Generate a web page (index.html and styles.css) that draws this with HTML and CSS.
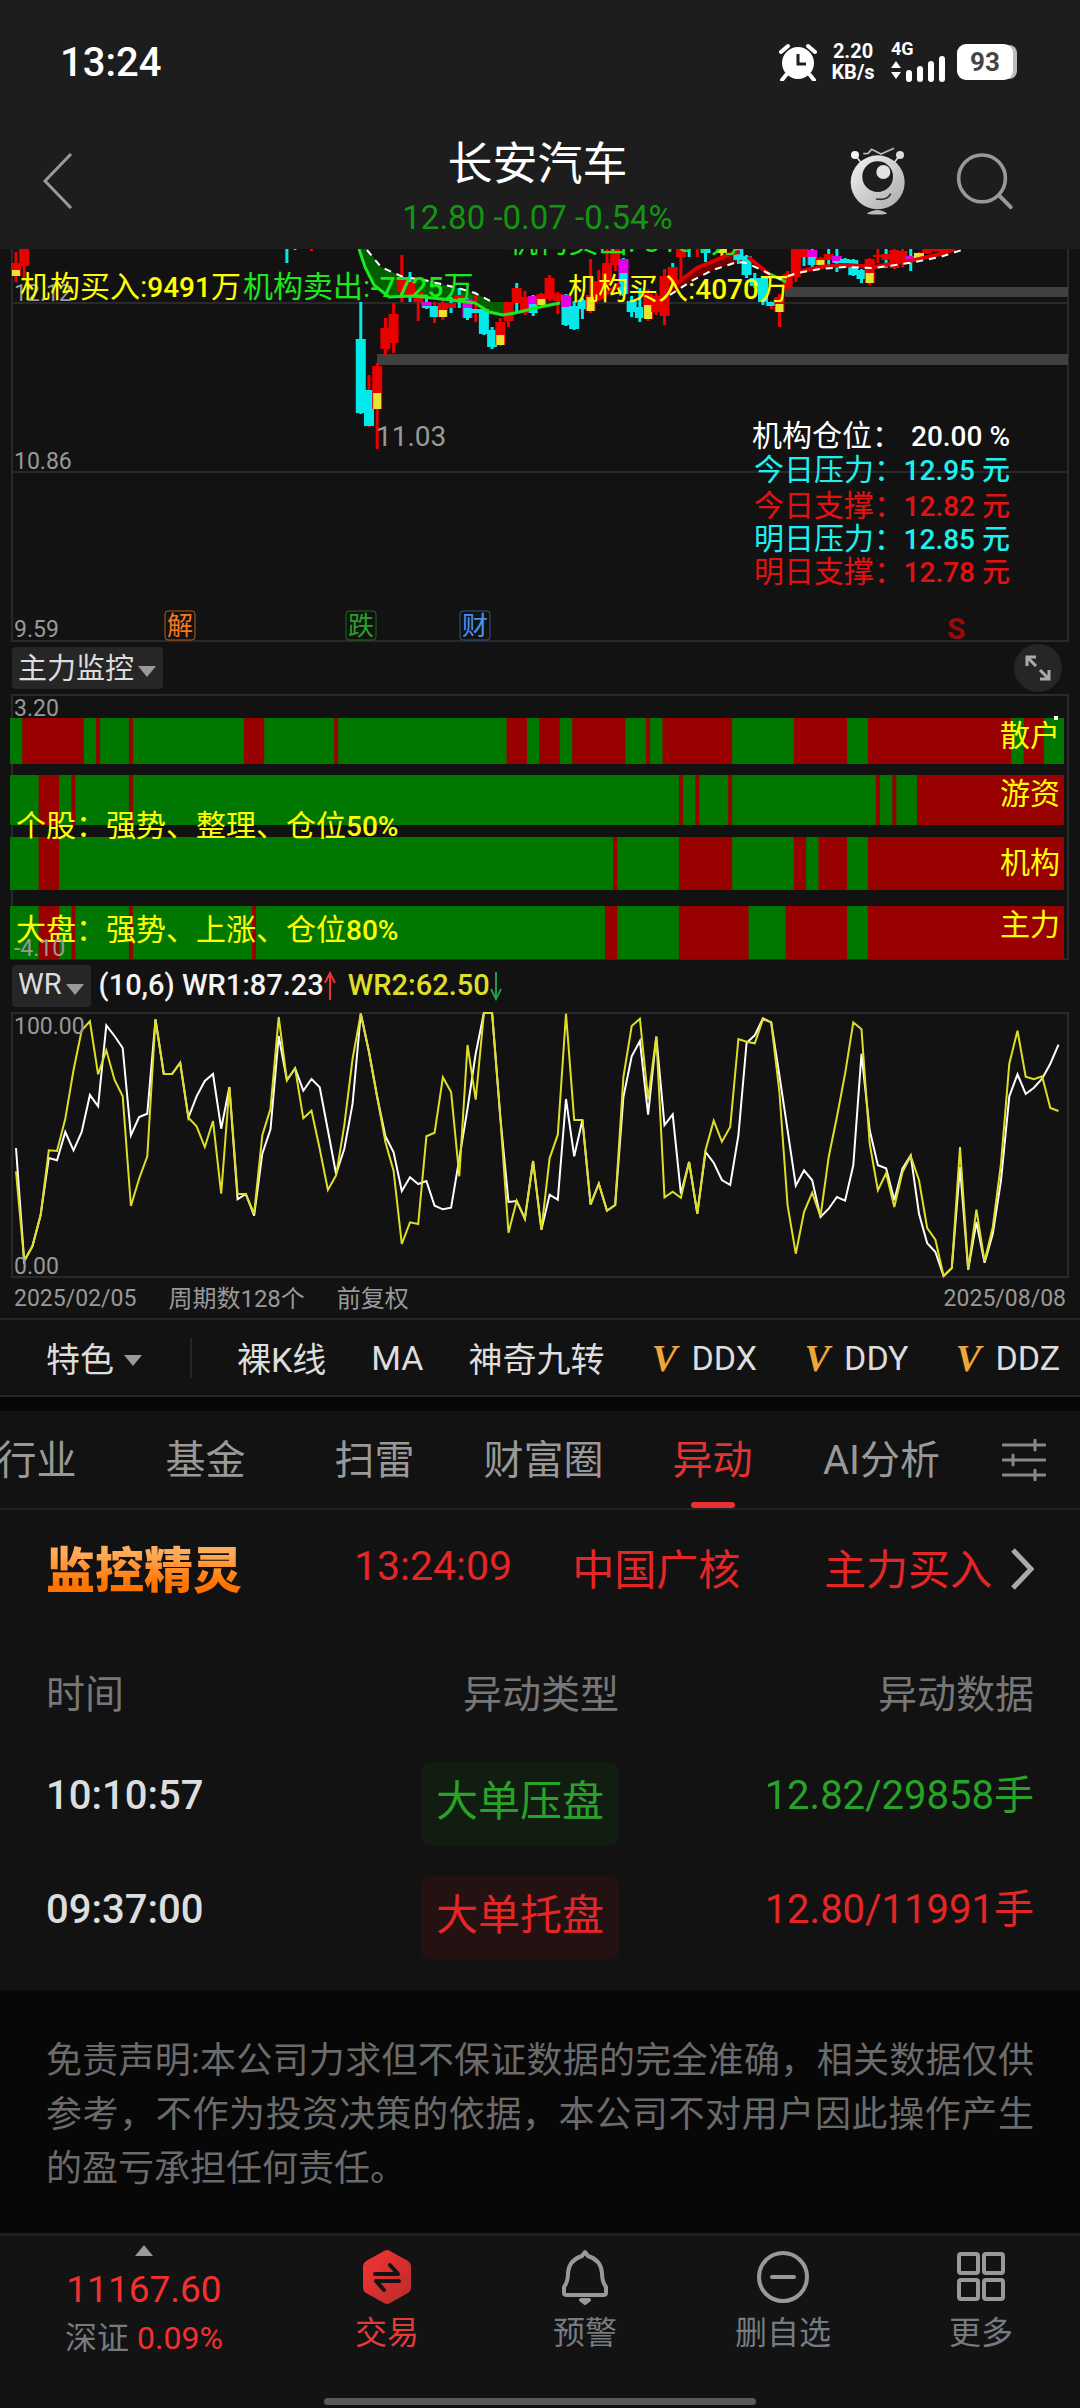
FILE: index.html
```html
<!DOCTYPE html>
<html lang="zh-CN">
<head>
    <meta charset="UTF-8">
    <meta name="viewport" content="width=device-width, initial-scale=1.0">
    <title>长安汽车</title>
    <link rel="stylesheet" href="styles.css">
</head>
<body>
    <header class="top">
        <div class="status">
            <span class="clock">13:24</span>
            <svg class="alarm" viewBox="0 0 38 38">
                <circle cx="19" cy="20" r="16" fill="#fff"/>
                <path d="M2 9L9 3M36 9L29 3M7 32L3 37M31 32L35 37" stroke="#fff" stroke-width="4" fill="none" stroke-linecap="round"/>
                <path d="M19 11V21H27" stroke="#1d1d1d" stroke-width="3" fill="none"/>
            </svg>
            <div class="speed">2.20<br>KB/s</div>
            <div class="signal">
                <span>4G</span>
                <svg viewBox="0 0 56 26">
                    <path d="M0 12L5 5L10 12ZM0 16L5 23L10 16Z" fill="#fff"/>
                    <path d="M18 23V17M29 23V13M40 23V8M51 23V3" stroke="#fff" stroke-width="6" stroke-linecap="round"/>
                </svg>
            </div>
            <div class="battery">93</div>
        </div>
        <div class="title-bar">
            <button class="icon-button" aria-label="返回">
                <svg class="back" viewBox="0 0 30 56"><path d="M28 1L2 28L28 55" stroke="#999" stroke-width="3" fill="none"/></svg>
            </button>
            <div class="title">
                <h1>长安汽车</h1>
                <p>12.80 -0.07 -0.54%</p>
            </div>
            <button class="icon-button" aria-label="助手">
                <svg class="robot" viewBox="48 22 168 204">
                    <defs>
                        <linearGradient id="head" x1="0" y1="0" x2="1" y2="1">
                            <stop offset="0" stop-color="#f4f4f4"/>
                            <stop offset="1" stop-color="#a9a9a9"/>
                        </linearGradient>
                    </defs>
                    <path d="M63 46L82 70M198 46L180 70" stroke="#ddd" stroke-width="5"/>
                    <circle cx="63" cy="46" r="12" fill="#f4f4f4"/>
                    <circle cx="198" cy="46" r="12" fill="#ddd"/>
                    <path d="M88 42L102 41L113 29L141 43L180 26" stroke="#bbb" stroke-width="5" fill="none"/>
                    <circle cx="131" cy="128" r="81" fill="url(#head)"/>
                    <circle cx="131" cy="111" r="46" fill="#1d1d1d"/>
                    <circle cx="148" cy="97" r="21" fill="#e2e2e2"/>
                    <path d="M126 178Q160 184 170 162" stroke="#333" stroke-width="5" fill="none"/>
                    <path d="M98 222Q131 200 160 222Q131 227 98 222Z" fill="#bbb"/>
                </svg>
            </button>
            <button class="icon-button" aria-label="搜索">
                <svg class="search" viewBox="364 36 176 176">
                    <circle cx="443" cy="116" r="71" stroke="#999" stroke-width="11" fill="none"/>
                    <path d="M495 168L530 203" stroke="#999" stroke-width="12" stroke-linecap="round"/>
                </svg>
            </button>
        </div>
    </header>

    <main>
        <svg class="chart" id="kline" viewBox="0 0 1080 393">
            <path class="frame" d="M12 0V392H1068V0M12 54H1068M12 223H1068"/>
            <path class="band" d="M785 38H1068V48H785ZM377 105H1068V116H377Z"/>
            <text class="axis" x="14" y="52">12.12</text>
            <path fill="#006000" d="M359 0L365 18L374 36L389 48L413 47L451 51L475 54L489 63L503 66L515 64L510 53L492 53L475 44L458 39L424 31L403 28L381 18L367 0Z"/>
            <path fill="#700" d="M670 40L697 19L733 4L747 9L737 13L713 21L693 31L670 46Z"/>
            <g id="candles"></g>
            <path class="ma up" d="M359 0L365 18L374 36L389 48L413 47L451 51L475 54L489 63L503 66L515 64L540 58L560 54M770 25L786 33"/>
            <path class="ma down" d="M595 52L620 35M668 41L697 19L733 4L740 3M748 8L770 26M797 23L820 18L845 16L875 18L895 14L915 11L940 5L955 0"/>
            <path class="ma mid" d="M367 1L381 18L403 28L424 31L458 39L475 44L492 53M670 46L693 31L713 21L737 13L747 14L780 30L797 24L820 20L845 18L875 19L915 13L940 8L965 0"/>
            <text class="note lime" x="508" y="3">机构卖出:-3101万</text>
            <text class="note yellow" x="20" y="48">机构买入:<tspan class="num">9491</tspan>万</text>
            <text class="note lime" x="243" y="48">机构卖出:<tspan class="num">-7725</tspan>万</text>
            <text class="note yellow" x="568" y="50">机构买入:<tspan class="num">4070</tspan>万</text>
            <text class="note num gray" x="376" y="197">11.03</text>
            <text class="axis" x="14" y="220">10.86</text>
            <text class="axis" x="14" y="388">9.59</text>

            <text class="note white" x="752" y="197">机构仓位：</text>
            <text class="note white num end" x="1010" y="197">20.00 %</text>
            <text class="note cyan" x="754" y="231">今日压力：</text>
            <text class="note cyan num end" x="1010" y="231">12.95 元</text>
            <text class="note red" x="754" y="267">今日支撑：</text>
            <text class="note red num end" x="1010" y="267">12.82 元</text>
            <text class="note cyan" x="754" y="300">明日压力：</text>
            <text class="note cyan num end" x="1010" y="300">12.85 元</text>
            <text class="note red" x="754" y="333">明日支撑：</text>
            <text class="note red num end" x="1010" y="333">12.78 元</text>

            <g class="tag" stroke="#b85a14" fill="#f5791a"><rect x="165" y="362" width="30" height="29" rx="3"/><text x="180" y="386">解</text></g>
            <g class="tag" stroke="#1b6b1b" fill="#25a325"><rect x="346" y="362" width="30" height="29" rx="3"/><text x="361" y="386">跌</text></g>
            <g class="tag" stroke="#2d5590" fill="#4a90f0"><rect x="460" y="362" width="30" height="29" rx="3"/><text x="475" y="386">财</text></g>
            <text class="sell" x="947" y="390">S</text>
        </svg>

        <div class="panel-bar">
            <button class="picker">主力监控<i class="caret"></i></button>
            <button class="expand" aria-label="全屏">
                <svg viewBox="0 0 26 26"><path d="M2 11V2H11M2 2L11 11M24 15V24H15M24 24L15 15" stroke="#aaa" stroke-width="3" fill="none"/></svg>
            </button>
        </div>
        <svg class="chart" id="monitor" viewBox="0 0 1080 266">
            <path class="frame" d="M12 1H1068V265H12Z"/>
            <g id="strips"></g>
            <rect x="1054" y="22" width="4" height="4" fill="#fff"/>
            <text class="axis" x="14" y="22">3.20</text>
            <text class="note yellow" x="16" y="142">个股：强势、整理、仓位<tspan class="num">50%</tspan></text>
            <text class="note yellow" x="16" y="246">大盘：强势、上涨、仓位<tspan class="num">80%</tspan></text>
            <text class="axis" x="14" y="262">-4.10</text>
            <text class="note yellow end" x="1060" y="52">散户</text>
            <text class="note yellow end" x="1060" y="110">游资</text>
            <text class="note yellow end" x="1060" y="179">机构</text>
            <text class="note yellow end" x="1060" y="241">主力</text>
        </svg>

        <div class="panel-bar">
            <button class="picker">WR<i class="caret"></i></button>
            <span class="wr">(10,6) WR1:87.23</span>
            <svg class="arrow" viewBox="0 0 12 30"><path d="M6 29V2M1 12L6 2L11 12" stroke="#e33" stroke-width="2" fill="none"/></svg>
            <span class="wr wr2">WR2:62.50</span>
            <svg class="arrow" viewBox="0 0 12 30"><path d="M6 1V28M1 18L6 28L11 18" stroke="#1f9a50" stroke-width="2" fill="none"/></svg>
        </div>
        <svg class="chart" viewBox="0 0 1080 266">
            <path class="frame" d="M12 1H1068V265H12Z"/>
            <polyline class="series" id="wr1" stroke="#fff"/>
            <polyline class="series" id="wr2" stroke="#dede28"/>
            <text class="axis" x="14" y="22">100.00</text>
            <text class="axis" x="14" y="262">0.00</text>
        </svg>
        <div class="dates">
            <span>2025/02/05</span>
            <span class="period">周期数128个</span>
            <span class="period">前复权</span>
            <span class="last">2025/08/08</span>
        </div>

        <div class="features">
            <button class="feature more">特色<i class="caret"></i></button>
            <button class="feature">裸K线</button>
            <button class="feature">MA</button>
            <button class="feature">神奇九转</button>
            <button class="feature"><b>V</b>DDX</button>
            <button class="feature"><b>V</b>DDY</button>
            <button class="feature"><b>V</b>DDZ</button>
        </div>

        <nav class="tabs">
            <div class="tab-list">
                <a href="#">行业</a>
                <a href="#">基金</a>
                <a href="#">扫雷</a>
                <a href="#">财富圈</a>
                <a href="#" class="active">异动</a>
                <a href="#">AI分析</a>
            </div>
            <button class="icon-button" aria-label="设置">
                <svg class="sliders" viewBox="0 0 44 42"><path d="M1 6H43M1 21H43M1 36H43M33 1V11M11 16V26M33 31V41" stroke="#888" stroke-width="3" stroke-linecap="round"/></svg>
            </button>
        </nav>

        <a href="#" class="alert">
            <strong>监控精灵</strong>
            <span class="alert-time">13:24:09</span>
            <span class="alert-name">中国广核</span>
            <span class="alert-type">主力买入</span>
            <svg viewBox="0 0 24 42"><path d="M3 2L21 21L3 40" stroke="#aaa" stroke-width="5" fill="none"/></svg>
        </a>

        <table class="moves">
            <thead>
                <tr><th>时间</th><th>异动类型</th><th>异动数据</th></tr>
            </thead>
            <tbody>
                <tr class="sell-row"><td>10:10:57</td><td><span class="pill">大单压盘</span></td><td>12.82/29858手</td></tr>
                <tr class="buy-row"><td>09:37:00</td><td><span class="pill">大单托盘</span></td><td>12.80/11991手</td></tr>
            </tbody>
        </table>
        <p class="disclaimer">免责声明:本公司力求但不保证数据的完全准确，相关数据仅供参考，不作为投资决策的依据，本公司不对用户因此操作产生的盈亏承担任何责任。</p>
    </main>

    <footer>
        <div class="bottom">
            <a href="#" class="index">
                <i class="caret caret-up"></i>
                <span class="index-value">11167.60</span>
                <span>深证 <em>0.09%</em></span>
            </a>
            <a href="#" class="trade">
                <svg viewBox="0 0 56 56">
                    <defs>
                        <linearGradient id="hex" x1="0" y1="0" x2="1" y2="1">
                            <stop offset="0" stop-color="#f53535"/>
                            <stop offset="1" stop-color="#b92a2a"/>
                        </linearGradient>
                    </defs>
                    <path d="M25 2Q28 0 31 2L49 12Q52 14 52 17V39Q52 42 49 44L31 54Q28 56 25 54L7 44Q4 42 4 39V17Q4 14 7 12Z" fill="url(#hex)"/>
                    <path d="M16 25H39L31 16M40 32H17L25 41" stroke="#131313" stroke-width="4" fill="none" stroke-linecap="round" stroke-linejoin="round"/>
                </svg>
                交易
            </a>
            <a href="#">
                <svg viewBox="0 0 56 56" stroke="#999" fill="none" stroke-width="4" stroke-linejoin="round">
                    <path d="M28 3L31 7Q44 11 45 24Q45 33 49 38V44Q49 46 46 46H10Q7 46 7 44V38Q11 33 11 24Q12 11 25 7Z"/>
                    <path d="M24 51H32L28 54Z" fill="#999"/>
                </svg>
                预警
            </a>
            <a href="#">
                <svg viewBox="0 0 56 56" stroke="#999" fill="none" stroke-width="4" stroke-linecap="round">
                    <circle cx="28" cy="28" r="24"/><path d="M17 28H39"/>
                </svg>
                删自选
            </a>
            <a href="#">
                <svg viewBox="0 0 56 56" stroke="#999" fill="none" stroke-width="4">
                    <rect x="6" y="5" width="19" height="19" rx="2"/><rect x="31" y="5" width="19" height="19" rx="2"/>
                    <rect x="6" y="31" width="19" height="19" rx="2"/><rect x="31" y="31" width="19" height="19" rx="2"/>
                </svg>
                更多
            </a>
        </div>
        <div class="home"></div>
    </footer>
    <script src="charts.js"></script>
</body>
</html>
```
FILE: styles.css
```css
* {
    margin: 0;
    padding: 0;
    box-sizing: border-box;
}

body {
    font-family: Roboto, "Noto Sans CJK SC", sans-serif;
    background-color: #121212;
    color: #ddd;
    min-height: 100vh;
    display: flex;
    flex-direction: column;
}

a {
    color: inherit;
    text-decoration: none;
}

button {
    font: inherit;
    color: inherit;
    background: none;
    border: none;
    cursor: pointer;
}

svg {
    display: block;
    flex-shrink: 0;
}

main {
    flex: 1;
    display: flex;
    flex-direction: column;
    background-color: #121212;
}

.icon-button {
    display: flex;
    align-items: center;
}

/* header */
.top {
    background-color: #1d1d1d;
    height: 249px;
}

.status {
    display: flex;
    align-items: center;
    height: 124px;
    padding: 0 67px 0 60px;
    color: #fff;
    font-weight: 500;
}

.clock {
    flex: 1;
    font-size: 40px;
}

.alarm {
    width: 38px;
    height: 38px;
}

.speed {
    width: 44px;
    margin-left: 14px;
    font-size: 20px;
    line-height: 21px;
    text-align: center;
    white-space: nowrap;
    font-weight: 700;
}

.signal {
    width: 56px;
    margin: 0 10px 0 16px;
    font-size: 18px;
    line-height: 14px;
    font-weight: 700;
}

.signal svg {
    width: 56px;
    height: 26px;
}

.battery {
    width: 56px;
    height: 36px;
    border-radius: 9px;
    background-color: #fff;
    color: #444;
    font-size: 26px;
    line-height: 36px;
    text-align: center;
    font-weight: 700;
    box-shadow: 5px 0 0 -1px #bbb;
}

.title-bar {
    display: flex;
    align-items: center;
    height: 125px;
    padding: 0 66px 12px 43px;
}

.title {
    flex: 1;
    padding: 20px 0 0 152px;
    text-align: center;
}

.title h1 {
    color: #fff;
    font-size: 45px;
    line-height: 54px;
    font-weight: 400;
}

.title p {
    color: #129612;
    font-size: 33px;
    line-height: 52px;
}

.back {
    width: 30px;
    height: 56px;
}

.robot {
    width: 56px;
    height: 68px;
    margin-right: 50px;
}

.search {
    width: 58px;
    height: 58px;
}

/* charts */
.chart {
    width: 100%;
    height: auto;
}

.frame {
    fill: none;
    stroke: #292929;
    stroke-width: 2;
}

.band {
    fill: #404040;
}

.axis {
    font-size: 23px;
    fill: #999;
}

.note {
    font-size: 30px;
}

.num {
    font-size: 28px;
    font-weight: 500;
}

.end {
    text-anchor: end;
}

.white { fill: #fff; }
.gray { fill: #999; font-weight: 400; }
.yellow { fill: #ff0; }
.lime { fill: #1ce81c; }
.cyan { fill: #1ef0f0; }
.red { fill: #e31212; }

.ma {
    fill: none;
    stroke-width: 3;
}

.ma.up { stroke: #1ce81c; }
.ma.down { stroke: #e00000; stroke-width: 4; }
.ma.mid { stroke: #fff; stroke-width: 2; stroke-dasharray: 7 6; }

.tag rect {
    fill: none;
    stroke-width: 1;
}

.tag text {
    font-size: 26px;
    stroke: none;
    text-anchor: middle;
}

.sell {
    font-size: 30px;
    font-weight: 700;
    fill: #990b0b;
}

.series {
    fill: none;
    stroke-width: 2;
}

.panel-bar {
    display: flex;
    align-items: center;
    height: 52px;
    padding: 0 18px 0 12px;
}

.picker {
    display: flex;
    align-items: center;
    gap: 4px;
    height: 42px;
    padding: 0 7px 4px 6px;
    border-radius: 4px;
    background-color: #262626;
    font-size: 29px;
}

.caret {
    border: 9px solid transparent;
    border-top: 11px solid #999;
    border-bottom: 0;
}

.caret-up {
    border-top: 0;
    border-bottom: 11px solid #999;
}

.picker .caret {
    margin-top: 10px;
}

.expand {
    display: flex;
    align-items: center;
    justify-content: center;
    width: 48px;
    height: 48px;
    margin-left: auto;
    border-radius: 50%;
    background-color: #262626;
}

.expand svg {
    width: 26px;
    height: 26px;
}

.wr {
    margin-left: 8px;
    color: #f4f4f4;
    font-size: 29px;
    line-height: 42px;
    padding-bottom: 2px;
    font-weight: 500;
}

.wr2 {
    margin-left: 12px;
    color: #dede28;
}

.arrow {
    width: 12px;
    height: 30px;
}

.dates {
    display: flex;
    gap: 32px;
    height: 42px;
    padding: 0 14px;
    border-bottom: 2px solid #262626;
    color: #999;
    font-size: 23px;
    line-height: 42px;
}

.dates .period {
    font-size: 24px;
}

.dates .last {
    margin-left: auto;
}

/* indicator shortcuts */
.features {
    display: flex;
    align-items: center;
    gap: 45px;
    height: 77px;
    padding-left: 46px;
    border-bottom: 2px solid #262626;
    font-size: 34px;
    white-space: nowrap;
    overflow: hidden;
}

.feature {
    display: flex;
    align-items: center;
    flex-shrink: 0;
}

.feature b {
    width: 30px;
    margin-right: 12px;
    color: #efa638;
    font-family: "Liberation Serif", serif;
    font-style: italic;
    font-size: 38px;
    line-height: 38px;
}

.more {
    height: 40px;
    padding-right: 48px;
    border-right: 2px solid #262626;
}

.more .caret {
    margin: 6px 0 0 10px;
}

/* section tabs */
.tabs {
    display: flex;
    align-items: center;
    height: 113px;
    border-top: 14px solid #070707;
    border-bottom: 2px solid #222;
    padding-right: 34px;
    overflow: hidden;
}

.tab-list {
    flex: 1;
    display: flex;
    height: 100%;
    margin: 0 36px 0 -48px;
}

.tab-list a {
    flex: 1 1 0;
    position: relative;
    color: #999;
    font-size: 40px;
    line-height: 100px;
    text-align: center;
}

.tab-list .active {
    color: #e63232;
}

.tab-list .active::after {
    content: "";
    position: absolute;
    left: 50%;
    bottom: 0;
    width: 44px;
    height: 6px;
    margin-left: -22px;
    border-radius: 3px;
    background-color: #e63232;
}

.sliders {
    width: 44px;
    height: 42px;
}

/* latest alert */
.alert {
    display: flex;
    align-items: center;
    height: 120px;
    padding: 0 46px 8px;
    color: #e42626;
    font-size: 42px;
    white-space: nowrap;
}

.alert strong {
    font-size: 49px;
    font-weight: 900;
    background: linear-gradient(#ffad5c 30%, #ff7300 75%);
    background-clip: text;
    -webkit-background-clip: text;
    color: transparent;
}

.alert-time {
    margin-left: 112px;
    font-size: 41px;
}

.alert-name {
    margin-left: 60px;
}

.alert-type {
    margin-left: auto;
}

.alert svg {
    width: 24px;
    height: 42px;
    margin: 6px 0 0 18px;
}

/* unusual moves */
.moves {
    margin: 0 46px 15px;
    border-spacing: 0;
    table-layout: fixed;
}

.moves th {
    height: 117px;
    padding-top: 5px;
    color: #777;
    font-size: 39px;
    font-weight: 400;
    text-align: right;
}

.moves td {
    height: 114px;
    padding-top: 15px;
    font-size: 40px;
    font-weight: 500;
    line-height: 68px;
    text-align: right;
    vertical-align: top;
}

.moves th:first-child,
.moves td:first-child {
    width: 28%;
    text-align: left;
}

.moves th:nth-child(2),
.moves td:nth-child(2) {
    width: 30%;
}

.moves td:last-child {
    font-weight: 400;
}

.pill {
    display: inline-block;
    height: 84px;
    padding: 0 15px;
    border-radius: 10px;
    font-size: 42px;
    font-weight: 400;
    line-height: 80px;
}

.sell-row .pill,
.sell-row td:last-child {
    color: #27a327;
}

.sell-row .pill {
    background-color: #121d12;
}

.buy-row .pill,
.buy-row td:last-child {
    color: #e62626;
}

.buy-row .pill {
    background-color: #241212;
}

.disclaimer {
    flex: 1;
    padding: 44px 46px 28px;
    background-color: #070707;
    color: #6b6b6b;
    font-size: 36px;
    line-height: 54px;
    text-align: justify;
}

/* bottom bar */
footer {
    border-top: 3px solid #1e1e1e;
    background-color: #131313;
}

.bottom {
    display: flex;
    height: 162px;
}

.bottom a {
    flex: 1;
    display: flex;
    flex-direction: column;
    align-items: center;
    padding-top: 13px;
    color: #757b80;
    font-size: 32px;
    line-height: 56px;
    white-space: nowrap;
}

.bottom svg {
    width: 56px;
    height: 56px;
}

.bottom .trade {
    color: #e33a3a;
}

.bottom .index {
    flex: 0 0 288px;
    padding-top: 9px;
    line-height: 48px;
}

.bottom .index-value {
    margin-top: 10px;
    color: #f23030;
    font-size: 37px;
}

.bottom em {
    color: #f23030;
    font-style: normal;
}

.home {
    width: 40%;
    height: 7px;
    margin: 0 auto 3px;
    border-radius: 4px;
    background-color: #595959;
}
```
FILE: charts.js
```js
const SVG = "http://www.w3.org/2000/svg";
const RED = "#eb0000", CYAN = "#00eaea", YELLOW = "#e6e632", PINK = "#e600e6";

// centre of the bar of day i, 128 days in view
const dayX = i => 16 + i * 8.2087;

function rect(parent, x, y, width, height, fill) {
    const el = document.createElementNS(SVG, "rect");
    el.setAttribute("x", x);
    el.setAttribute("y", y);
    el.setAttribute("width", width);
    el.setAttribute("height", height);
    el.setAttribute("fill", fill);
    parent.appendChild(el);
}

// day, high, body top, body bottom, low, wick, body, [split, colour under the split]
const candles = [
    [0, 3, 14, 27, 33, RED, RED, 21, YELLOW],
    [1, 0, 0, 17, 31, RED, RED],
    [33, 0, 0, 0, 14, CYAN, CYAN],
    [34, 0, 0, 0, 1, CYAN, CYAN],
    [36, 0, 0, 0, 2, RED, RED],
    [42, 53, 90, 164, 165, CYAN, CYAN],
    [43, 126, 141, 177, 178, RED, CYAN],
    [44, 114, 117, 160, 200, RED, RED, 144, YELLOW],
    [45, 69, 79, 100, 106, RED, RED],
    [46, 54, 65, 94, 104, RED, RED],
    [47, 6, 29, 43, 53, RED, RED],
    [48, 23, 33, 48, 53, CYAN, RED],
    [49, 41, 43, 53, 72, RED, RED],
    [50, 46, 53, 59, 60, CYAN, PINK, 57, CYAN],
    [51, 53, 57, 68, 74, RED, CYAN],
    [52, 51, 54, 68, 71, RED, RED, 61, YELLOW],
    [53, 48, 54, 59, 64, CYAN, RED],
    [54, 39, 46, 53, 59, CYAN, RED],
    [55, 49, 50, 69, 71, CYAN, PINK, 59, CYAN],
    [56, 47, 60, 64, 73, RED, CYAN],
    [57, 59, 60, 85, 86, CYAN, CYAN],
    [58, 78, 81, 98, 100, CYAN, CYAN],
    [59, 69, 73, 96, 97, RED, RED, 86, YELLOW],
    [60, 53, 53, 72, 78, RED, RED],
    [61, 34, 39, 54, 63, CYAN, RED],
    [62, 42, 48, 64, 66, RED, RED],
    [63, 46, 47, 64, 67, CYAN, PINK, 55, CYAN],
    [64, 44, 45, 56, 57, RED, RED, 50, YELLOW],
    [65, 26, 29, 50, 52, RED, RED],
    [66, 43, 45, 52, 65, RED, RED],
    [67, 45, 46, 76, 77, CYAN, PINK, 58, CYAN],
    [68, 52, 57, 80, 81, CYAN, CYAN],
    [69, 49, 51, 60, 70, CYAN, CYAN],
    [70, 10, 46, 62, 64, RED, RED, 48, YELLOW],
    [71, 21, 32, 50, 52, RED, RED],
    [72, 0, 14, 35, 38, RED, RED],
    [73, 0, 0, 16, 22, RED, RED],
    [74, 9, 10, 45, 47, CYAN, PINK, 24, CYAN],
    [75, 47, 52, 63, 68, CYAN, CYAN],
    [76, 39, 58, 69, 73, CYAN, CYAN],
    [77, 40, 45, 70, 72, RED, RED, 56, YELLOW],
    [78, 44, 47, 63, 66, RED, RED],
    [79, 20, 27, 67, 76, RED, RED],
    [80, 14, 18, 34, 36, CYAN, RED],
    [81, 0, 0, 8, 32, RED, RED],
    [82, 0, 0, 0, 8, CYAN, CYAN],
    [83, 0, 0, 0, 8, RED, RED],
    [84, 0, 0, 4, 13, CYAN, CYAN],
    [86, 0, 0, 4, 7, YELLOW, YELLOW],
    [88, 0, 0, 11, 15, CYAN, CYAN],
    [89, 6, 7, 26, 29, CYAN, CYAN],
    [90, 24, 29, 37, 39, CYAN, CYAN],
    [91, 28, 29, 53, 56, CYAN, CYAN],
    [92, 52, 53, 57, 60, RED, CYAN],
    [93, 45, 48, 63, 78, RED, RED, 55, YELLOW],
    [94, 22, 25, 39, 40, RED, RED],
    [95, 0, 0, 28, 33, RED, RED],
    [96, 0, 0, 8, 17, CYAN, RED],
    [97, 0, 1, 16, 21, CYAN, PINK, 8, CYAN],
    [98, 8, 9, 16, 17, RED, RED, 11, YELLOW],
    [99, 0, 5, 11, 17, CYAN, RED],
    [100, 0, 7, 14, 23, CYAN, PINK, 12, CYAN],
    [101, 9, 10, 14, 19, CYAN, CYAN],
    [102, 10, 11, 26, 27, CYAN, CYAN],
    [103, 20, 21, 30, 34, CYAN, CYAN],
    [104, 9, 10, 34, 36, RED, RED, 24, YELLOW],
    [105, 0, 6, 8, 14, RED, RED],
    [106, 0, 5, 11, 19, CYAN, RED],
    [107, 0, 1, 19, 20, RED, RED],
    [108, 0, 2, 11, 18, RED, RED],
    [109, 0, 7, 12, 22, CYAN, PINK, 10, CYAN],
    [110, 3, 4, 9, 11, RED, YELLOW],
    [111, 0, 0, 4, 5, RED, RED],
    [112, 0, 0, 2, 3, RED, RED],
    [113, 0, 0, 3, 4, RED, RED]
];

const candleLayer = document.getElementById("candles");
candles.forEach(([day, high, top, bottom, low, wick, body, split, under]) => {
    const x = dayX(day);
    rect(candleLayer, x - 1.5, high, 3, low - high, wick);
    rect(candleLayer, x - 5, top, 10, bottom - top, body);
    if (split) {
        rect(candleLayer, x - 4, split, 8, bottom - split, under);
    }
});

// strips of the monitor panel: red runs of days over a green bar
const strips = [
    { y: 24, height: 46, runs: [[1, 8], [10, 10], [14, 14], [28, 30], [39, 39], [60, 62], [64, 66], [68, 74], [77, 77], [79, 87], [95, 101], [104, 121], [123, 125]] },
    { y: 81, height: 50, runs: [[3, 5], [7, 7], [14, 14], [81, 81], [83, 83], [87, 87], [105, 105], [107, 107], [110, 127]] },
    { y: 143, height: 53, runs: [[3, 5], [73, 73], [81, 87], [95, 96], [98, 101], [104, 127]] },
    { y: 212, height: 53, runs: [[3, 5], [7, 7], [14, 14], [29, 29], [72, 73], [81, 89], [94, 101], [104, 127]] }
];

const stripLayer = document.getElementById("strips");
strips.forEach(strip => {
    rect(stripLayer, 10, strip.y, 1054, strip.height, "#007800");
    strip.runs.forEach(([from, to]) => {
        const x = dayX(from) - 2;
        const end = to === 127 ? 1064 : dayX(to) + 2;
        rect(stripLayer, x, strip.y, end - x, strip.height, "#990000");
    });
});

// WR levels, 38 is WR 100 and 830 is WR 0
const wr1 = [443, 782, 738, 645, 473, 480, 395, 450, 395, 284, 318, 75, 107, 143, 405, 350,
    340, 57, 221, 221, 187, 352, 288, 242, 221, 385, 260, 597, 581, 646, 460, 387,
    107, 240, 204, 271, 236, 261, 390, 521, 445, 310, 40, 155, 290, 408, 456, 572,
    531, 551, 542, 616, 627, 622, 475, 325, 160, 38, 38, 350, 605, 602, 655, 482,
    688, 583, 598, 296, 468, 359, 612, 550, 631, 614, 290, 168, 122, 343, 109, 374,
    342, 580, 485, 640, 455, 487, 539, 554, 405, 127, 105, 54, 66, 225, 390, 556,
    510, 540, 650, 625, 590, 601, 495, 160, 390, 495, 504, 600, 505, 465, 640, 729,
    755, 827, 803, 500, 808, 665, 787, 700, 540, 288, 222, 281, 262, 235, 190, 133];
const wr2 = [513, 782, 738, 645, 450, 452, 355, 210, 90, 63, 222, 150, 238, 288, 617, 535,
    468, 57, 221, 221, 187, 352, 378, 440, 362, 580, 260, 581, 581, 640, 405, 325,
    50, 240, 204, 354, 331, 445, 569, 525, 375, 175, 40, 155, 290, 425, 512, 731,
    666, 671, 408, 397, 231, 275, 528, 134, 298, 38, 38, 350, 697, 601, 655, 482,
    688, 474, 403, 40, 359, 359, 612, 550, 631, 614, 230, 77, 55, 297, 109, 591,
    574, 592, 485, 640, 450, 361, 424, 380, 116, 124, 129, 57, 66, 275, 615, 760,
    635, 577, 648, 470, 350, 220, 66, 87, 430, 570, 519, 620, 515, 467, 540, 683,
    718, 827, 803, 440, 808, 628, 783, 680, 490, 190, 91, 229, 237, 228, 323, 332];

function drawSeries(id, levels) {
    const points = levels.map((level, i) => dayX(i).toFixed(1) + "," + (1 + (level - 38) / 3).toFixed(1));
    document.getElementById(id).setAttribute("points", points.join(" "));
}

drawSeries("wr1", wr1);
drawSeries("wr2", wr2);
```
